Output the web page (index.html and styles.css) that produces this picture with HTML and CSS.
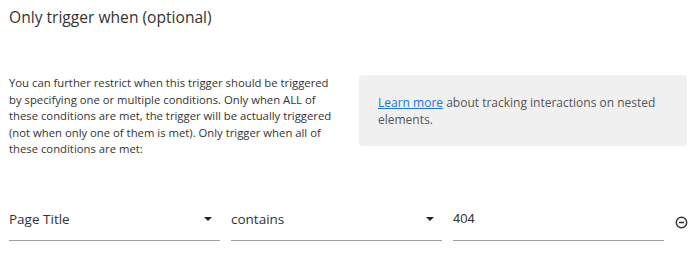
FILE: index.html
```html
<!DOCTYPE html>
<html>
<head>
<meta charset="utf-8">
<link rel="stylesheet" href="styles.css">
</head>
<body>
<div class="page">
  <h2 class="title">Only trigger when (optional)</h2>
  <div class="cols">
    <p class="desc">You can further restrict when this trigger should be triggered by specifying one or multiple conditions. Only when ALL of these conditions are met, the trigger will be actually triggered (not when only one of them is met). Only trigger when all of these conditions are met:</p>
    <div class="note"><a href="#" class="link">Learn more</a> about tracking interactions on nested elements.</div>
  </div>
  <div class="row">
    <div class="field select"><span class="val">Page Title</span><span class="caret"></span></div>
    <div class="field select"><span class="val">contains</span><span class="caret"></span></div>
    <div class="field input"><span class="val num">404</span></div>
    <svg class="remove" width="13" height="13" viewBox="0 0 13 13"><circle cx="6.5" cy="6.5" r="5.2" fill="none" stroke="#333" stroke-width="1.4"/><line x1="4" y1="6.5" x2="9" y2="6.5" stroke="#333" stroke-width="1.6"/></svg>
  </div>
</div>
</body>
</html>
```
FILE: styles.css
```css
html, body { margin: 0; padding: 0; background: #fff; }
body { font-family: "Open Sans", "Noto Sans", sans-serif; color: #333; }
.page { padding: 6px 9px 0 9px; }
.title { margin: 0; font-size: 15.6px; font-weight: 400; line-height: 22px; color: #333; }
.cols { display: flex; gap: 20px; margin-top: 47px; align-items: flex-start; }
.desc { margin: 0; width: 330px; flex-shrink: 0; font-size: 11.3px; line-height: 16.6px; color: #333; }
.note { width: 290px; background: #f0f0f0; border-radius: 3px; padding: 19px 19px 18px 19px; font-size: 12px; line-height: 17px; color: #555; min-height: 34px; }
.link { color: #1a73e8; text-decoration: underline; }
.row { display: flex; align-items: flex-end; gap: 11px; margin-top: 51px; }
.field { width: 211px; flex-shrink: 0; border-bottom: 1px solid #9e9e9e; display: flex; align-items: center; justify-content: space-between; padding-bottom: 11px; }
.val { font-size: 13.5px; line-height: 20px; color: #333; }
.num { font-family: "Liberation Sans", Arial, sans-serif; font-size: 13px; }
.caret { width: 0; height: 0; border-left: 4px solid transparent; border-right: 4px solid transparent; border-top: 4px solid #222; margin-right: 8px; }
.remove { flex-shrink: 0; margin-bottom: 12px; }
```
